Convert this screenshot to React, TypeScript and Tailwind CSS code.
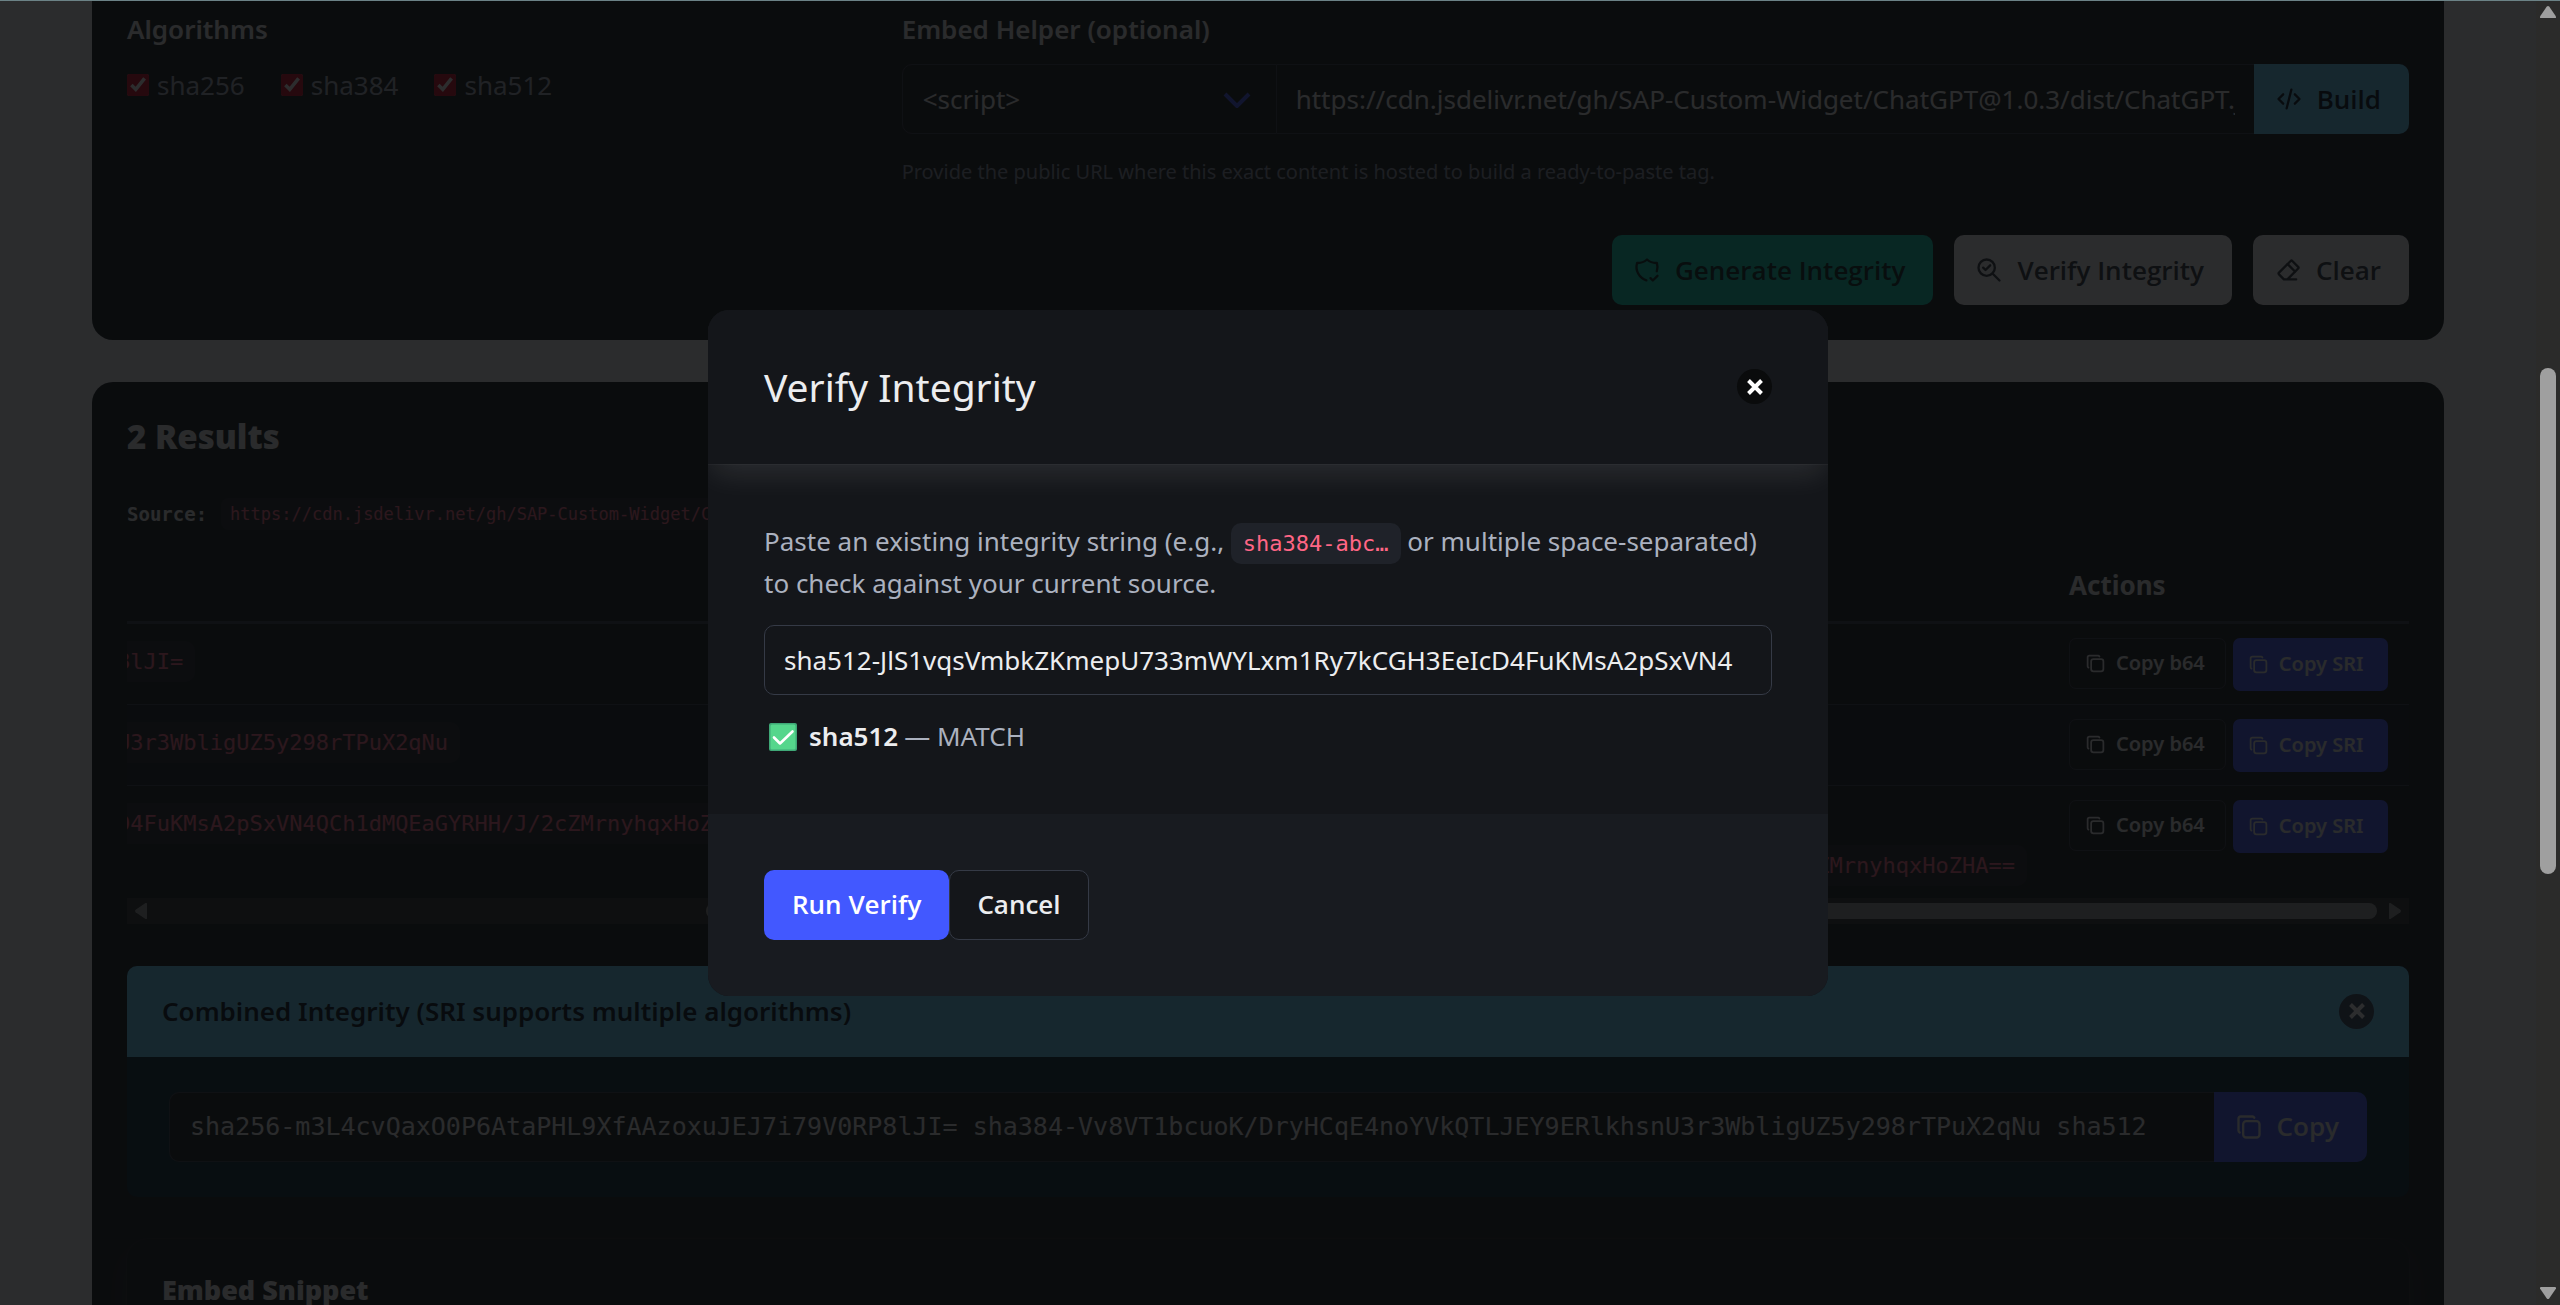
import type { ReactNode } from "react";
import { TbCode, TbCopy, TbEraser, TbShieldCheck, TbZoomCheck } from "react-icons/tb";

const SHA256 = "m3L4cvQaxO0P6AtaPHL9XfAAzoxuJEJ7i79V0RP8lJI=";
const SHA384 = "Vv8VT1bcuoK/DryHCqE4noYVkQTLJEY9ERlkhsnU3r3WbligUZ5y298rTPuX2qNu";
const SHA512 = "JlS1vqsVmbkZKmepU733mWYLxm1Ry7kCGH3EeIcD4FuKMsA2pSxVN4QCh1dMQEaGYRHH/J/2cZMrnyhqxHoZHA==";

const RESULTS = [
  { name: "sha256", hash: SHA256 },
  { name: "sha384", hash: SHA384 },
  { name: "sha512", hash: SHA512 },
];

const COMBINED = `sha256-${SHA256} sha384-${SHA384} sha512`;

const SOURCE = "https://cdn.jsdelivr.net/gh/SAP-Custom-Widget/ChatGPT@1.0.3/dist/ChatGPT.js";

function ActionButton({ icon, className, children }: { icon: ReactNode; className: string; children: ReactNode }) {
  return (
    <button
      type="button"
      className={"flex h-[70px] shrink-0 items-center gap-3.5 pl-[21px] pr-7 font-['Open_Sans',sans-serif] text-[26px] font-semibold " + className}
    >
      {icon}
      {children}
    </button>
  );
}

function SmallCopy({ className, children }: { className: string; children: ReactNode }) {
  return (
    <button type="button" className={"flex items-center gap-2.5 rounded-[7px] pl-[15px] pr-5 text-[20px] leading-7 font-semibold text-[#ecedef] " + className}>
      <TbCopy size={21} />
      {children}
    </button>
  );
}

function CloseButton({ label, className }: { label: string; className: string }) {
  return (
    <button type="button" aria-label={label} className={"flex size-[35px] items-center justify-center rounded-full " + className}>
      <svg viewBox="0 0 16 16" className="size-4" fill="none" stroke="white" strokeWidth="4">
        <path d="M1.5 1.5l13 13M14.5 1.5l-13 13" />
      </svg>
    </button>
  );
}

function OptionsCard() {
  return (
    <section className="rounded-b-[21px] bg-[#14161a] px-[35px] pt-2 pb-[35px]">
      <div className="grid grid-cols-3 gap-[42px]">
        <fieldset>
          <legend className="mb-3.5 h-[42px] text-[26px] leading-[42px] font-semibold text-[#ecedef]">Algorithms</legend>
          <div className="flex gap-9">
            {RESULTS.map((r) => (
              <label key={r.name} className="flex h-[42px] items-center gap-2 text-[26px]">
                <input type="checkbox" defaultChecked className="size-[22px] accent-[#d6001c]" />
                {r.name}
              </label>
            ))}
          </div>
        </fieldset>
        <div className="col-span-2">
          <label htmlFor="embed-url" className="mb-3.5 block h-[42px] text-[26px] leading-[42px] font-semibold text-[#ecedef]">
            Embed Helper (optional)
          </label>
          <div className="flex h-[70px]">
            <div className="relative w-[375px] shrink-0">
              <select
                aria-label="Tag type"
                className="size-full appearance-none rounded-l-[10px] border border-[#353a46] bg-[#14161a] px-5 text-[26px] text-[#ecedef]"
              >
                <option>&lt;script&gt;</option>
                <option>&lt;link&gt;</option>
              </select>
              <svg viewBox="0 0 28 16" className="pointer-events-none absolute top-7 right-[26px] h-4 w-7" fill="none" stroke="#4258ff" strokeWidth="4">
                <path d="M2 2l12 12L26 2" />
              </svg>
            </div>
            <input
              id="embed-url"
              type="text"
              defaultValue={SOURCE}
              className="min-w-0 flex-1 border-y border-[#353a46] bg-[#14161a] px-[19px] text-[26px] text-[#ecedef]"
            />
            <ActionButton icon={<TbCode size={28} />} className="rounded-r-[10px] bg-[#66d1ff] text-[#00131c]">
              Build
            </ActionButton>
          </div>
          <p className="mt-[22px] text-[20px] leading-[31px] text-[#8f96a8]">
            Provide the public URL where this exact content is hosted to build a ready-to-paste tag.
          </p>
        </div>
      </div>
      <div className="mt-12 flex justify-end gap-[21px]">
        <ActionButton icon={<TbShieldCheck size={28} />} className="rounded-[10px] bg-[#00d1b2] text-[#00241f]">
          Generate Integrity
        </ActionButton>
        <ActionButton icon={<TbZoomCheck size={28} />} className="rounded-[10px] bg-[#f3f4f6] text-[#2e333d]">
          Verify Integrity
        </ActionButton>
        <ActionButton icon={<TbEraser size={28} />} className="rounded-[10px] bg-[#f3f4f6] text-[#2e333d]">
          Clear
        </ActionButton>
      </div>
    </section>
  );
}

function HashCode({ children }: { children: ReactNode }) {
  return (
    <code className="rounded-[10px] bg-[#1f2229] px-3 py-2 font-['DejaVu_Sans_Mono',monospace] text-[22px] leading-none text-[#ff6685]">
      {children}
    </code>
  );
}

function ResultsTable() {
  return (
    <div className="mt-[21px]">
      <div className="flex justify-end overflow-hidden">
        <table className="shrink-0 table-fixed border-collapse text-left text-[26px]">
          <colgroup>
            <col className="w-[180px]" />
            <col className="w-[1261px]" />
            <col className="w-[1219px]" />
            <col className="w-[361px]" />
          </colgroup>
          <thead>
            <tr className="h-[71px] border-b-[3px] border-[#353a46] text-[#ecedef]">
              <th className="px-[21px] font-semibold">Algorithm</th>
              <th className="px-[21px] font-semibold">Base64</th>
              <th className="px-[21px] font-semibold">SRI</th>
              <th className="px-[21px] font-bold">Actions</th>
            </tr>
          </thead>
          <tbody className="align-top">
            {RESULTS.map((r) => (
              <tr key={r.name} className="border-b border-[#353a46] last:border-b-0 even:bg-[#12161d]">
                <td className="px-[21px] py-3.5 leading-[42px]">{r.name}</td>
                <td className="px-[21px] py-3.5 leading-[42px]">
                  <HashCode>{r.hash}</HashCode>
                </td>
                <td className="px-[21px] py-3.5 leading-[42px]">
                  <HashCode>{r.name + "-" + r.hash}</HashCode>
                </td>
                <td className="px-[21px] pt-3.5 pb-[13px]">
                  <div className="flex items-start gap-[7px]">
                    <SmallCopy className="h-[51px] border border-[#353a46] bg-[#14161a]">Copy b64</SmallCopy>
                    <SmallCopy className="h-[53px] flex-1 bg-[#4258ff]">Copy SRI</SmallCopy>
                  </div>
                </td>
              </tr>
            ))}
          </tbody>
        </table>
      </div>
      <div className="flex h-[26px] items-center justify-between bg-[#2c2c2c] px-2">
        <svg viewBox="0 0 12 16" className="h-4 w-3" fill="#9f9f9f">
          <path d="M12 1v14q0 1.500-1.500 1L.6 9.200q-1-1.200 0-2.400L10.500 0q1.500-.5 1.500 1z" />
        </svg>
        <div className="mr-3 ml-auto h-4 w-[1671px] rounded-full bg-[#9f9f9f]" />
        <svg viewBox="0 0 12 16" className="h-4 w-3" fill="#9f9f9f">
          <path d="M0 1v14q0 1.500 1.500 1l9.900-6.800q1-1.200 0-2.400L1.500 0Q0-.5 0 1z" />
        </svg>
      </div>
    </div>
  );
}

function ResultsCard() {
  return (
    <section className="mt-[42px] rounded-t-[21px] bg-[#14161a] p-[35px]">
      <h2 className="mb-[42px] font-['Open_Sans',sans-serif] text-[33px] leading-[39px] font-extrabold text-[#ecedef]">2 Results</h2>
      <p className="flex items-center gap-3.5 font-['DejaVu_Sans_Mono',monospace] leading-8">
        <strong className="text-[19px] font-bold text-[#ecedef]">Source:</strong>
        <code className="rounded-[8px] bg-[#1f2229] px-[9px] font-['DejaVu_Sans_Mono',monospace] text-[17px] text-[#ff6685]">{SOURCE}</code>
      </p>
      <ResultsTable />
      <article className="mt-[42px] overflow-hidden rounded-[10px] bg-[#002433]">
        <header className="flex h-[91px] items-center justify-between bg-[#66d1ff] px-[35px] text-[26px] font-semibold text-[#00131c]">
          <p>Combined Integrity (SRI supports multiple algorithms)</p>
          <CloseButton label="Dismiss" className="bg-[#35475a]" />
        </header>
        <div className="flex px-[42px] py-[35px]">
          <input
            type="text"
            readOnly
            aria-label="Combined integrity"
            value={COMBINED}
            className="h-[70px] min-w-0 flex-1 rounded-l-[10px] border border-r-0 border-[#353a46] bg-[#14161a] px-5 font-['DejaVu_Sans_Mono',monospace] text-[25px] text-[#ecedef]"
          />
          <ActionButton icon={<TbCopy size={28} />} className="rounded-r-[10px] bg-[#4258ff] text-[#ecedef]">
            Copy
          </ActionButton>
        </div>
      </article>
      <div className="mt-[42px] rounded-[21px] bg-[#14161a] p-[35px] shadow-[0_14px_28px_-4px_rgba(255,255,255,0.1),0_0_0_1px_rgba(255,255,255,0.03)]">
        <h3 className="font-['Open_Sans',sans-serif] text-[27px] leading-8 font-extrabold text-[#ecedef]">Embed Snippet</h3>
      </div>
    </section>
  );
}

function VerifyModal() {
  return (
    <div role="dialog" aria-modal="true" aria-labelledby="verify-title" className="w-[1120px] overflow-hidden rounded-[21px] bg-[#14161a]">
      <header className="relative flex items-center justify-between bg-[#14161a] p-14 shadow-[0_14px_28px_-4px_rgba(255,255,255,0.1),0_0_0_1px_rgba(255,255,255,0.03)]">
        <h2 id="verify-title" className="text-[39px] leading-[42px] text-[#ecedef]">
          Verify Integrity
        </h2>
        <CloseButton label="Close" className="bg-[#0a0b0c]" />
      </header>
      <div className="p-14">
        <p className="text-[26px] leading-[42px]">
          Paste an existing integrity string (e.g., <HashCode>sha384-abc…</HashCode> or multiple space-separated) to check against your current source.
        </p>
        <input
          type="text"
          aria-label="Integrity string"
          defaultValue="sha512-JlS1vqsVmbkZKmepU733mWYLxm1Ry7kCGH3EeIcD4FuKMsA2pSxVN4"
          className="mt-[21px] h-[70px] w-full rounded-[10px] border border-[#353a46] bg-[#14161a] px-[19px] text-[26px] text-[#ecedef]"
        />
        <p className="mt-[21px] flex h-[42px] items-center text-[26px]">
          <svg viewBox="0 0 28 28" className="mr-3 ml-[5px] size-7" role="img" aria-label="Match">
            <rect width="28" height="28" rx="2" fill="#3fa877" />
            <rect x="1.500" y="1.500" width="25" height="25" rx="1.500" fill="#55d68c" />
            <path d="M5 14.500l6 6L23.500 8.500" fill="none" stroke="white" strokeWidth="2.600" strokeLinecap="round" strokeLinejoin="round" />
          </svg>
          <strong className="mr-1.5 font-semibold text-[#ecedef]">sha512</strong>— MATCH
        </p>
      </div>
      <footer className="flex bg-[#181b20] p-14 font-['Open_Sans',sans-serif] text-[26px] font-semibold text-[#ecedef]">
        <button type="button" className="h-[70px] rounded-[10px] bg-[#4258ff] px-7 text-white">
          Run Verify
        </button>
        <button type="button" className="h-[70px] rounded-[10px] border border-[#353a46] bg-[#14161a] px-[27px]">
          Cancel
        </button>
      </footer>
    </div>
  );
}

function PageScrollbar() {
  return (
    <div className="absolute inset-y-0 right-0 flex w-6 flex-col items-center bg-[#2b2b2a] py-1.5">
      <svg viewBox="0 0 16 12" className="h-3 w-4" fill="#9f9f9f">
        <path d="M1 12h14q1.500 0 1-1.500L9.200.6q-1.200-1-2.400 0L0 10.500Q-.5 12 1 12z" />
      </svg>
      <div className="mt-[350px] h-[506px] w-4 rounded-full bg-[#9f9f9f]" />
      <svg viewBox="0 0 16 12" className="mt-auto h-3 w-4" fill="#9f9f9f">
        <path d="M1 0h14q1.500 0 1 1.500l-6.800 9.900q-1.200 1-2.400 0L0 1.500Q-.5 0 1 0z" />
      </svg>
    </div>
  );
}

export default function App() {
  return (
    <div className="relative h-screen overflow-hidden bg-[#f3f4f6] font-['Noto_Sans','Open_Sans',sans-serif] text-[#abb1bf]">
      <main className="pr-[116px] pl-[92px]">
        <OptionsCard />
        <ResultsCard />
      </main>
      <div className="absolute inset-0 flex items-center justify-center bg-[#090a0c]/86 pr-6">
        <VerifyModal />
      </div>
      <PageScrollbar />
      <div className="absolute inset-x-0 top-0 h-px bg-[#6b8286]" />
    </div>
  );
}
